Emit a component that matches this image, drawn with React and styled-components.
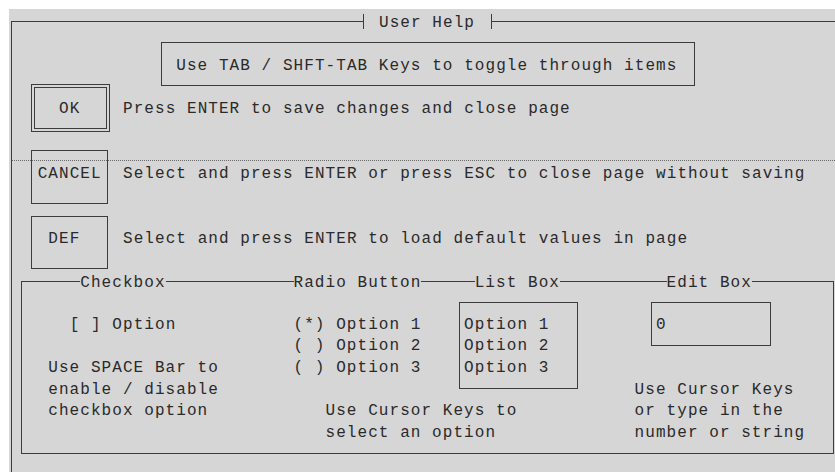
import styled, { createGlobalStyle } from "styled-components";

// character cell of the text-mode screen
const CW = 10.66;
const RH = 21.7;
const NUDGE = 2.5; // glyphs sit a little low in each cell
const BG = "#d6d6d6";
const INK = "#2a2a2a";
const LINE = "#3c3c3c";

const GlobalStyle = createGlobalStyle`
  html, body {
    margin: 0;
    padding: 0;
    background: #ffffff;
    overflow: hidden;
  }
`;

const Screen = styled.div`
  box-sizing: border-box;
  height: 100vh;
  padding: 9px 0 0 9px;
  background: #ffffff;
`;

const Panel = styled.div`
  position: relative;
  height: 100%;
  overflow: hidden;
  background: ${BG};
  color: ${INK};
  font-family: "Liberation Mono", "DejaVu Sans Mono", monospace;
  font-size: 16px;
  letter-spacing: ${CW - 9.6}px;
  line-height: ${RH}px;
`;

const Frame = styled.div`
  position: relative;
  display: flex;
  flex-direction: column;
  align-items: flex-start;
  margin: 12px 0 0 2px;
  min-height: 520px;
  border-top: 1px solid ${LINE};
  border-left: 1px solid ${LINE};
`;

const FrameTitle = styled.div`
  display: flex;
  align-items: center;
  height: ${RH}px;
  margin: -11.35px 0 0 351px;
  background: ${BG};
`;

const Tick = styled.span`
  width: 1px;
  height: 15px;
  background: ${LINE};
`;

const TitleText = styled.span`
  box-sizing: border-box;
  height: ${RH}px;
  padding: ${NUDGE}px 15.8px 0 15px;
  white-space: pre;
`;

const HintBox = styled.div`
  box-sizing: border-box;
  display: flex;
  align-items: center;
  width: 534px;
  height: 44px;
  margin: 9.65px 0 0 149px;
  padding: ${NUDGE * 2}px 0 0 14.3px;
  border: 1px solid ${LINE};
  white-space: pre;
`;

const DottedRule = styled.div`
  position: absolute;
  top: 138px;
  left: 0;
  right: 0;
  border-top: 1px dotted #6a6a6a;
  pointer-events: none;
`;

const ActionRow = styled.div`
  display: grid;
  grid-template-columns: 92px 1fr;
  align-items: start;
  margin: ${(p) => p.$top}px 0 0 19px;
`;

const KeyButton = styled.div`
  box-sizing: border-box;
  width: ${(p) => p.$w}px;
  height: ${(p) => p.$h}px;
  padding: ${(p) => p.$textTop - 1 + NUDGE}px 0 0 5.7px;
  border: 1px solid ${LINE};
  white-space: pre;
  box-shadow: ${(p) =>
    p.$focused ? `inset 0 0 0 2px ${BG}, inset 0 0 0 3px ${LINE}` : "none"};
`;

const ActionText = styled.div`
  padding-top: ${(p) => p.$textTop + NUDGE}px;
  white-space: pre;
`;

const GroupBox = styled.div`
  box-sizing: border-box;
  display: grid;
  grid-template-columns: 271.5px 165.5px 175.6px 1fr;
  width: 813px;
  height: 173px;
  margin: 12px 0 0 9px;
  border: 1px solid ${LINE};
`;

const Section = styled.div`
  display: flex;
  flex-direction: column;
  align-items: flex-start;
`;

const Legend = styled.div`
  box-sizing: border-box;
  height: ${RH}px;
  margin: -11.35px 0 0 ${(p) => p.$left}px;
  padding-top: ${NUDGE}px;
  background: ${BG};
  white-space: pre;
`;

const TextLine = styled.div`
  box-sizing: border-box;
  height: ${RH}px;
  margin-top: ${(p) => p.$top || 0}px;
  padding: ${NUDGE}px 0 0 ${(p) => p.$left || 0}px;
  white-space: pre;
`;

const FieldBox = styled.div`
  box-sizing: border-box;
  width: ${(p) => p.$w}px;
  height: ${(p) => p.$h}px;
  margin: 9.65px 0 0 ${(p) => p.$left || 0}px;
  padding: 9.15px 0 0 ${(p) => p.$pad}px;
  border: 1px solid ${LINE};
`;

const actions = [
  {
    label: "  OK  ",
    text: "Press ENTER to save changes and close page",
    top: -2,
    w: 79,
    h: 48,
    textTop: 13,
    focused: true,
  },
  {
    label: "CANCEL",
    text: "Select and press ENTER or press ESC to close page without saving",
    top: 18,
    w: 77,
    h: 54,
    textTop: 12,
  },
  {
    label: " DEF  ",
    text: "Select and press ENTER to load default values in page",
    top: 12,
    w: 77,
    h: 53,
    textTop: 11,
  },
];

const options = ["Option 1", "Option 2", "Option 3"];

export default function App() {
  return (
    <>
      <GlobalStyle />
      <Screen>
        <Panel>
          <Frame>
            <FrameTitle>
              <Tick />
              <TitleText>User Help</TitleText>
              <Tick />
            </FrameTitle>
            <HintBox>Use TAB / SHFT-TAB Keys to toggle through items</HintBox>

            {actions.map((a) => (
              <ActionRow key={a.label} $top={a.top}>
                <KeyButton
                  $w={a.w}
                  $h={a.h}
                  $textTop={a.textTop}
                  $focused={a.focused}
                >
                  {a.label}
                </KeyButton>
                <ActionText $textTop={a.textTop}>{a.text}</ActionText>
              </ActionRow>
            ))}

            <GroupBox>
              <Section>
                <Legend $left={58.3}>Checkbox</Legend>
                <TextLine $top={19.8} $left={47.7}>
                  [ ] Option
                </TextLine>
                <TextLine $top={RH} $left={26.3}>
                  Use SPACE Bar to
                </TextLine>
                <TextLine $left={26.3}>enable / disable</TextLine>
                <TextLine $left={26.3}>checkbox option</TextLine>
              </Section>

              <Section>
                <Legend $left={0}>Radio Button</Legend>
                <TextLine $top={19.8}>(*) Option 1</TextLine>
                <TextLine>( ) Option 2</TextLine>
                <TextLine>( ) Option 3</TextLine>
                <TextLine $top={RH} $left={32}>
                  Use Cursor Keys to
                </TextLine>
                <TextLine $left={32}>select an option</TextLine>
              </Section>

              <Section>
                <Legend $left={15.7}>List Box</Legend>
                <FieldBox $w={119} $h={87} $pad={4.1}>
                  {options.map((o) => (
                    <TextLine key={o}>{o}</TextLine>
                  ))}
                </FieldBox>
              </Section>

              <Section>
                <Legend $left={32}>Edit Box</Legend>
                <FieldBox $w={120} $h={44} $pad={3.9} $left={16.4}>
                  <TextLine>0</TextLine>
                </FieldBox>
                <TextLine $top={31.25}>Use Cursor Keys</TextLine>
                <TextLine>or type in the</TextLine>
                <TextLine>number or string</TextLine>
              </Section>
            </GroupBox>

            <DottedRule />
          </Frame>
        </Panel>
      </Screen>
    </>
  );
}
